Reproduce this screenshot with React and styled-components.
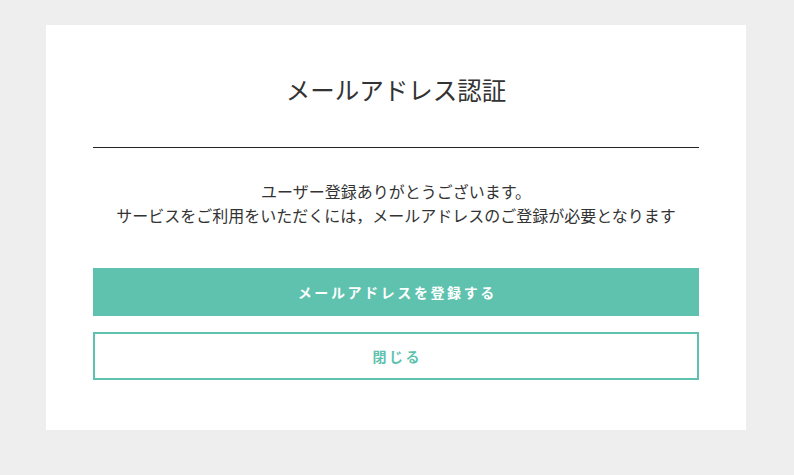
import React from "react";
import styled, { createGlobalStyle } from "styled-components";

const Global = createGlobalStyle`
  html, body { margin: 0; padding: 0; background: #eeeeee; }
  body { font-family: "Noto Sans CJK JP", "Noto Sans", sans-serif; color: #333; }
`;

const Page = styled.div`
  padding: 25px 48px 45px 46px;
`;

const Card = styled.div`
  width: 700px;
  box-sizing: border-box;
  background: #fff;
  padding: 47px 47px 50px;
`;

const Title = styled.h1`
  margin: 0;
  font-size: 24.5px;
  font-weight: 400;
  line-height: 36px;
  text-align: center;
  color: #333;
  padding-bottom: 39px;
  border-bottom: 1px solid #222;
`;

const Message = styled.p`
  margin: 31px 0 41px;
  font-size: 16px;
  line-height: 24px;
  text-align: center;
  color: #333;
`;

const Actions = styled.div`
  display: flex;
  flex-direction: column;
  gap: 16px;
`;

const Button = styled.button`
  display: flex;
  align-items: center;
  justify-content: center;
  height: 48px;
  width: 100%;
  box-sizing: border-box;
  font-family: "Noto Sans CJK JP", "Noto Sans", sans-serif;
  font-size: 14px;
  font-weight: 700;
  letter-spacing: 2.6px;
  padding: 0 0 0 2.6px;
  cursor: pointer;
  border-style: solid;
  border-color: #5ec2ae;
  border-width: ${(p) => (p.$primary ? "0" : "2px")};
  background: ${(p) => (p.$primary ? "#5ec2ae" : "#fff")};
  color: ${(p) => (p.$primary ? "#fff" : "#5ec2ae")};
`;

export default function App() {
  return (
    <>
      <Global />
      <Page>
        <Card>
          <Title>メールアドレス認証</Title>
          <Message>
            ユーザー登録ありがとうございます。
            <br />
            サービスをご利用をいただくには，メールアドレスのご登録が必要となります
          </Message>
          <Actions>
            <Button $primary>メールアドレスを登録する</Button>
            <Button>閉じる</Button>
          </Actions>
        </Card>
      </Page>
    </>
  );
}
